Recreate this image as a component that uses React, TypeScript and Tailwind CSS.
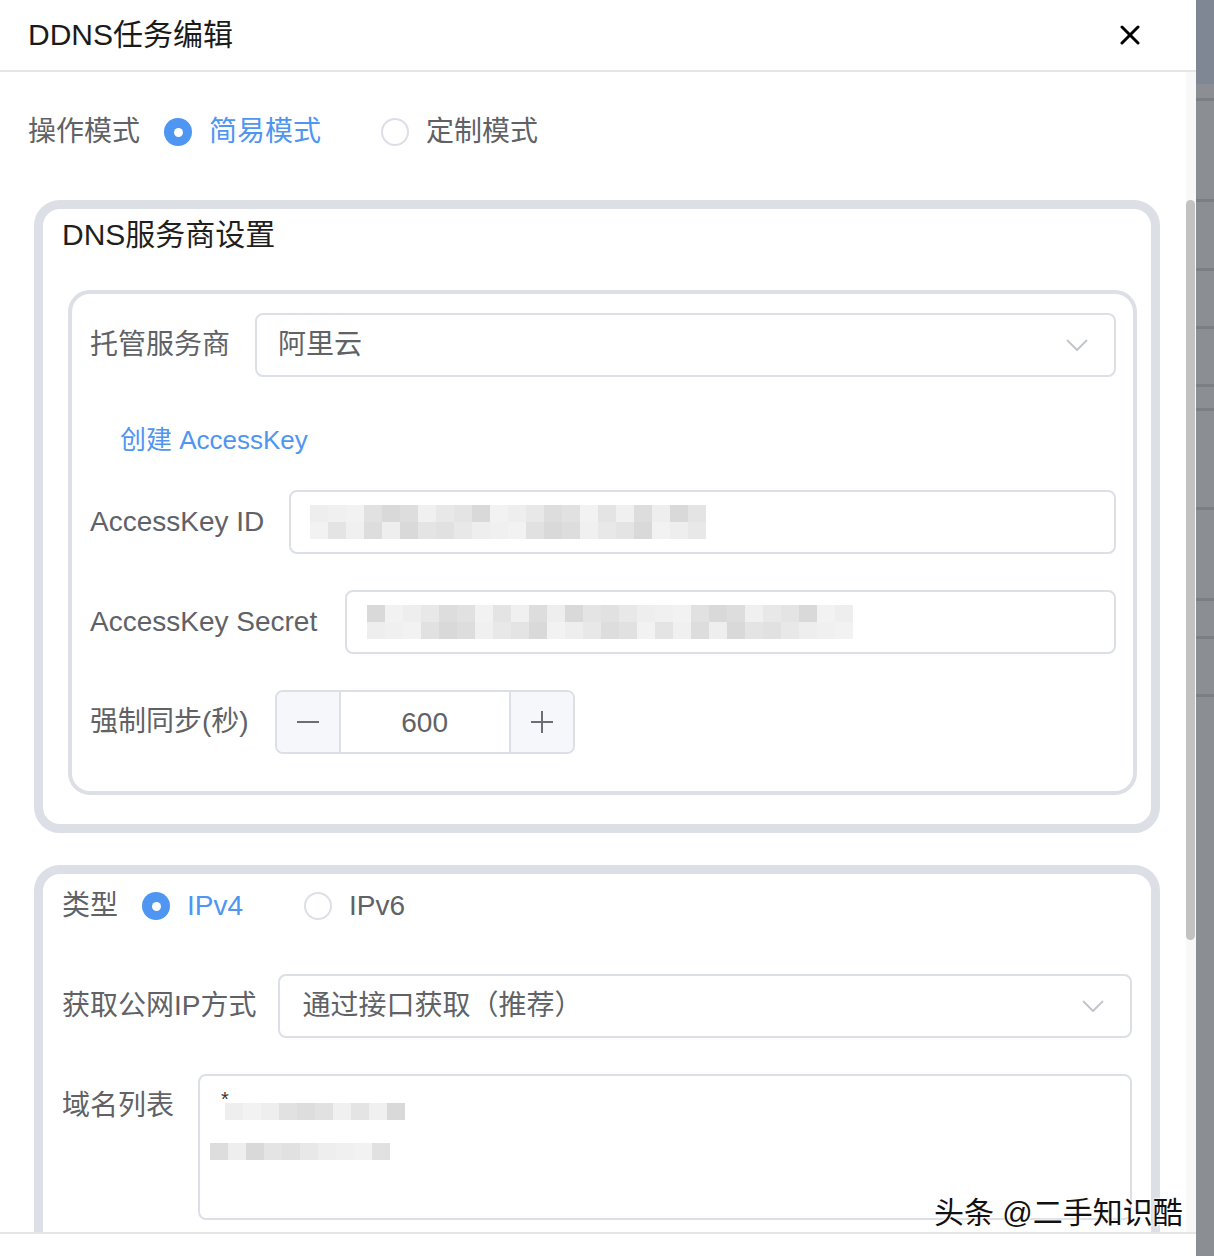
import React from "react";

const shades = [
  "bg-[#eeeeee]",
  "bg-[#e4e4e4]",
  "bg-[#dddddd]",
  "bg-[#f2f2f2]",
  "bg-[#e8e8e8]",
  "bg-[#d9d9d9]",
  "bg-[#f0f0f0]",
  "bg-[#e1e1e1]",
];

function Mosaic({ cols, rows, seed }: { cols: number; rows: number; seed: number }) {
  const r: number[][] = [];
  for (let y = 0; y < rows; y++) {
    const row: number[] = [];
    for (let x = 0; x < cols; x++) {
      row.push((x * 5 + y * 3 + seed * 7 + ((x * x + seed) % 3)) % shades.length);
    }
    r.push(row);
  }
  return (
    <div className="flex flex-col">
      {r.map((row, y) => (
        <div key={y} className="flex">
          {row.map((s, x) => (
            <div key={x} className={`w-[18px] h-[17px] ${shades[s]}`} />
          ))}
        </div>
      ))}
    </div>
  );
}

function Radio({ checked, label }: { checked: boolean; label: string }) {
  return (
    <div className="flex items-center gap-[17px]">
      {checked ? (
        <div className="w-[28px] h-[28px] rounded-full bg-[#4f95f2] flex items-center justify-center">
          <div className="w-[9px] h-[9px] rounded-full bg-white" />
        </div>
      ) : (
        <div className="w-[28px] h-[28px] rounded-full border-2 border-[#dcdfe6] bg-white" />
      )}
      <span className={checked ? "text-[#4f95f2]" : "text-[#606266]"}>{label}</span>
    </div>
  );
}

function Chevron() {
  return (
    <svg width="22" height="13" viewBox="0 0 22 13" fill="none">
      <polyline points="1.5,1.5 11,11 20.5,1.5" stroke="#c0c4cc" strokeWidth="1.8" strokeLinecap="round" strokeLinejoin="round" />
    </svg>
  );
}

const stripSegments = [101, 69, 58, 58, 24, 99, 91, 38, 58];

export default function App() {
  return (
    <div className="relative w-[1214px] h-[1256px] flex overflow-hidden bg-white font-['Liberation_Sans','Noto_Sans_CJK_SC',sans-serif]">
      {/* modal */}
      <div className="w-[1196px] flex flex-col bg-white">
        {/* header */}
        <div className="h-[72px] shrink-0 flex items-center justify-between pl-[28px] pr-[56px] border-b-2 border-[#e6e6e6]">
          <span className="text-[30px] text-[#1a1a1a] leading-[36px]">DDNS任务编辑</span>
          <svg width="20" height="20" viewBox="0 0 20 20">
            <line x1="2" y1="2" x2="18" y2="18" stroke="#000" strokeWidth="3" strokeLinecap="round" />
            <line x1="18" y1="2" x2="2" y2="18" stroke="#000" strokeWidth="3" strokeLinecap="round" />
          </svg>
        </div>
        {/* body */}
        <div className="h-[1160px] shrink-0 flex overflow-hidden">
          <div className="flex-1 flex flex-col pt-[42px] text-[28px] text-[#606266]">
            {/* operation mode */}
            <div className="h-[36px] leading-[36px] pl-[28px] flex items-center">
              <span className="mr-[24px]">操作模式</span>
              <Radio checked label="简易模式" />
              <div className="ml-[60px]">
                <Radio checked={false} label="定制模式" />
              </div>
            </div>

            {/* card 1 */}
            <div className="mt-[50px] ml-[34px] w-[1126px] shrink-0 border-[9px] border-[#dcdfe6] rounded-[26px] bg-white flex flex-col">
              <div className="pt-[8px] pl-[19px] h-[44px] leading-[36px] text-[30px] text-[#1f1f1f]">DNS服务商设置</div>
              <div className="mt-[37px] ml-[25px] mr-[14px] mb-[29px] border-4 border-[#dcdfe6] rounded-[22px] pt-[19px] pb-[37px] pl-[18px] pr-[17px] flex flex-col">
                <div className="flex items-center gap-[25px] h-[64px]">
                  <span className="shrink-0">托管服务商</span>
                  <div className="flex-1 h-[64px] border-2 border-[#dcdfe6] rounded-[8px] flex items-center justify-between pl-[21px] pr-[26px]">
                    <span>阿里云</span>
                    <Chevron />
                  </div>
                </div>
                <div className="mt-[45px] h-[36px] leading-[36px] ml-[30px] text-[26px] text-[#4f95f2]">创建 AccessKey</div>
                <div className="mt-[32px] flex items-center gap-[25px] h-[64px]">
                  <span className="shrink-0">AccessKey ID</span>
                  <div className="flex-1 h-[64px] border-2 border-[#dcdfe6] rounded-[8px] flex items-center pl-[19px]">
                    <Mosaic cols={22} rows={2} seed={1} />
                  </div>
                </div>
                <div className="mt-[36px] flex items-center gap-[28px] h-[64px]">
                  <span className="shrink-0">AccessKey Secret</span>
                  <div className="flex-1 h-[64px] border-2 border-[#dcdfe6] rounded-[8px] flex items-center pl-[20px]">
                    <Mosaic cols={27} rows={2} seed={4} />
                  </div>
                </div>
                <div className="mt-[36px] flex items-center gap-[26px] h-[64px]">
                  <span className="shrink-0">强制同步(秒)</span>
                  <div className="w-[300px] h-[64px] border-2 border-[#dcdfe6] rounded-[8px] flex overflow-hidden">
                    <div className="w-[64px] bg-[#f5f7fa] border-r-2 border-[#dcdfe6] flex items-center justify-center">
                      <div className="w-[22px] h-[2px] bg-[#6b6e73]" />
                    </div>
                    <div className="flex-1 flex items-center justify-center pt-[2px]">600</div>
                    <div className="w-[64px] bg-[#f5f7fa] border-l-2 border-[#dcdfe6] flex items-center justify-center">
                      <div className="relative w-[22px] h-[22px] flex items-center justify-center">
                        <div className="w-[22px] h-[2px] bg-[#6b6e73]" />
                        <div className="absolute left-[10px] top-0 w-[2px] h-[22px] bg-[#6b6e73]" />
                      </div>
                    </div>
                  </div>
                </div>
              </div>
            </div>

            {/* card 2 */}
            <div className="mt-[32px] ml-[34px] w-[1126px] shrink-0 border-[9px] border-[#dcdfe6] rounded-[26px] bg-white flex flex-col pt-[14px] pl-[19px] pr-[19px] pb-[40px]">
              <div className="h-[36px] leading-[36px] flex items-center">
                <span className="mr-[24px]">类型</span>
                <Radio checked label="IPv4" />
                <div className="ml-[61px]">
                  <Radio checked={false} label="IPv6" />
                </div>
              </div>
              <div className="mt-[50px] flex items-center gap-[22px] h-[64px]">
                <span className="shrink-0">获取公网IP方式</span>
                <div className="flex-1 h-[64px] border-2 border-[#dcdfe6] rounded-[8px] flex items-center justify-between pl-[22px] pr-[26px]">
                  <span>通过接口获取（推荐）</span>
                  <Chevron />
                </div>
              </div>
              <div className="mt-[36px] flex items-start gap-[24px]">
                <span className="shrink-0 h-[64px] leading-[64px]">域名列表</span>
                <div className="flex-1 h-[146px] border-2 border-[#dcdfe6] rounded-[8px] flex flex-col pt-[27px]">
                  <div className="relative ml-[25px] w-[180px]">
                    <Mosaic cols={10} rows={1} seed={2} />
                    <span className="absolute left-[-4px] top-[-14px] text-[20px] leading-[20px] text-[#333]">*</span>
                  </div>
                  <div className="mt-[23px] ml-[10px]">
                    <Mosaic cols={10} rows={1} seed={6} />
                  </div>
                </div>
              </div>
              <div className="mt-[40px] h-[64px]" />
            </div>
          </div>
          {/* scrollbar */}
          <div className="w-[10px] shrink-0 bg-[#f8f8f8] flex flex-col">
            <div className="mt-[128px] h-[740px] w-[9px] rounded-full bg-[#c2c2c2]" />
          </div>
        </div>
        {/* footer */}
        <div className="flex-1 border-t-2 border-[#e6e6e6] bg-white" />
      </div>

      {/* background strip */}
      <div className="w-[18px] shrink-0 flex flex-col bg-[#8b8e92]">
        <div className="h-[84px] bg-[#7e8793]" />
        <div className="h-[14px]" />
        {stripSegments.map((h, i) => (
          <div key={i} className="border-t-[3px] border-[#7b7e82]" style={{ height: h }} />
        ))}
        <div className="flex-1 border-t-[3px] border-[#7b7e82]" />
      </div>

      {/* watermark */}
      <div className="absolute left-[934px] top-[1195px] text-[30px] leading-[36px] text-[#111] [text-shadow:0_0_2px_#fff,0_0_3px_#fff,1px_1px_0_#fff]">
        头条 @二手知识酷
      </div>
    </div>
  );
}
